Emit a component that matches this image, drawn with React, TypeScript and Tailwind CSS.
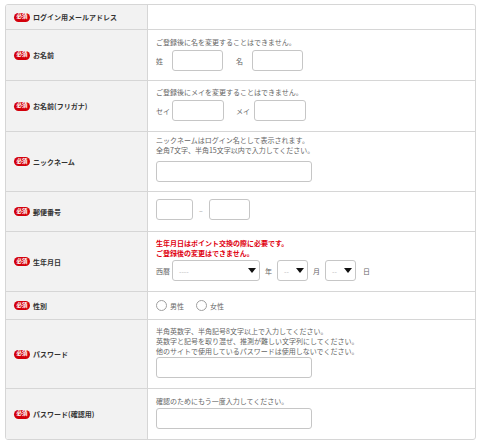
import type { ReactNode } from 'react';

const FONT = "font-['Noto_Sans_CJK_JP','Noto_Sans',sans-serif]";

function Badge() {
  return (
    <span className="inline-flex items-center justify-center w-[16px] h-[9px] rounded-full bg-[#d3000b] text-white text-[5.5px] font-bold leading-none shrink-0">
      必須
    </span>
  );
}

function TextBox({ w }: { w: string }) {
  return <input type="text" className={`${w} h-[21px] bg-white border border-[#c6c6c6] rounded-[3px] outline-none`} />;
}

function Caret() {
  return (
    <svg width="8" height="5" viewBox="0 0 8 5" className="shrink-0">
      <path d="M0 0H8L4 5Z" fill="#111" />
    </svg>
  );
}

function SelectBox({ w, placeholder }: { w: string; placeholder: string }) {
  return (
    <div className={`${w} h-[21px] bg-white border border-[#c6c6c6] rounded-[3px] flex items-center justify-between pl-[6px] pr-[3px]`}>
      <span className="text-[#bbb]">{placeholder}</span>
      <Caret />
    </div>
  );
}

function Radio({ label }: { label: string }) {
  return (
    <label className="flex items-center gap-[3px]">
      <span className="w-[11px] h-[11px] rounded-full border border-[#9f9f9f] bg-white" />
      <span>{label}</span>
    </label>
  );
}

function Row({ label, h, first, children, body = '' }: { label: string; h: string; first?: boolean; children?: ReactNode; body?: string }) {
  return (
    <div className={`flex ${h} ${first ? '' : 'border-t border-[#d6d6d6]'}`}>
      <div className="w-[142px] shrink-0 bg-[#f2f2f2] border-r border-[#d6d6d6] flex items-center gap-[3px] pl-[8px]">
        <Badge />
        <span className="font-bold text-[#333]">{label}</span>
      </div>
      <div className={`flex-1 pl-[8px] flex flex-col ${body}`}>{children}</div>
    </div>
  );
}

export default function App() {
  return (
    <div className={`${FONT} bg-white w-[480px] h-[441px] pt-[4px] pl-[5px] text-[7px] leading-[10px] text-[#666]`}>
      <div className="w-[471px] border border-[#d6d6d6] rounded-[3px] overflow-hidden">
        <Row label="ログイン用メールアドレス" h="h-[24px]" first />

        <Row label="お名前" h="h-[51px]" body="pt-[7px]">
          <p>ご登録後に名を変更することはできません。</p>
          <div className="flex items-center mt-[3px]">
            <span className="w-[16px]">姓</span>
            <TextBox w="w-[51px]" />
            <span className="w-[16px] ml-[13px]">名</span>
            <TextBox w="w-[51px]" />
          </div>
        </Row>

        <Row label="お名前(フリガナ)" h="h-[51px]" body="pt-[6px]">
          <p>ご登録後にメイを変更することはできません。</p>
          <div className="flex items-center mt-[3px]">
            <span className="w-[16px]">セイ</span>
            <TextBox w="w-[52px]" />
            <span className="w-[18px] ml-[12px]">メイ</span>
            <TextBox w="w-[52px]" />
          </div>
        </Row>

        <Row label="ニックネーム" h="h-[60px]" body="pt-[3px]">
          <p>ニックネームはログイン名として表示されます。</p>
          <p>全角7文字、半角15文字以内で入力してください。</p>
          <div className="mt-[6px]">
            <TextBox w="w-[156px]" />
          </div>
        </Row>

        <Row label="郵便番号" h="h-[40px]" body="pt-[7px]">
          <div className="flex items-center">
            <TextBox w="w-[37px]" />
            <span className="mx-[6px] text-[#999]">–</span>
            <TextBox w="w-[41px]" />
          </div>
        </Row>

        <Row label="生年月日" h="h-[60px]" body="pt-[6px]">
          <p className="text-[#e00010] font-bold">生年月日はポイント交換の際に必要です。</p>
          <p className="text-[#e00010] font-bold">ご登録後の変更はできません。</p>
          <div className="flex items-center mt-[2px]">
            <span className="mr-[2px]">西暦</span>
            <SelectBox w="w-[88px]" placeholder="----" />
            <span className="mx-[5px]">年</span>
            <SelectBox w="w-[31px]" placeholder="--" />
            <span className="mx-[5px]">月</span>
            <SelectBox w="w-[31px]" placeholder="--" />
            <span className="ml-[7px]">日</span>
          </div>
        </Row>

        <Row label="性別" h="h-[28px]" body="justify-center">
          <div className="flex items-center gap-[12px]">
            <Radio label="男性" />
            <Radio label="女性" />
          </div>
        </Row>

        <Row label="パスワード" h="h-[69px]" body="pt-[6px]">
          <p>半角英数字、半角記号8文字以上で入力してください。</p>
          <p>英数字と記号を取り混ぜ、推測が難しい文字列にしてください。</p>
          <p>他のサイトで使用しているパスワードは使用しないでください。</p>
          <div className="mt-[1px]">
            <TextBox w="w-[156px]" />
          </div>
        </Row>

        <Row label="パスワード(確認用)" h="h-[51px]" body="pt-[7px]">
          <p>確認のためにもう一度入力してください。</p>
          <div className="mt-[2px]">
            <TextBox w="w-[156px]" />
          </div>
        </Row>
      </div>
    </div>
  );
}
